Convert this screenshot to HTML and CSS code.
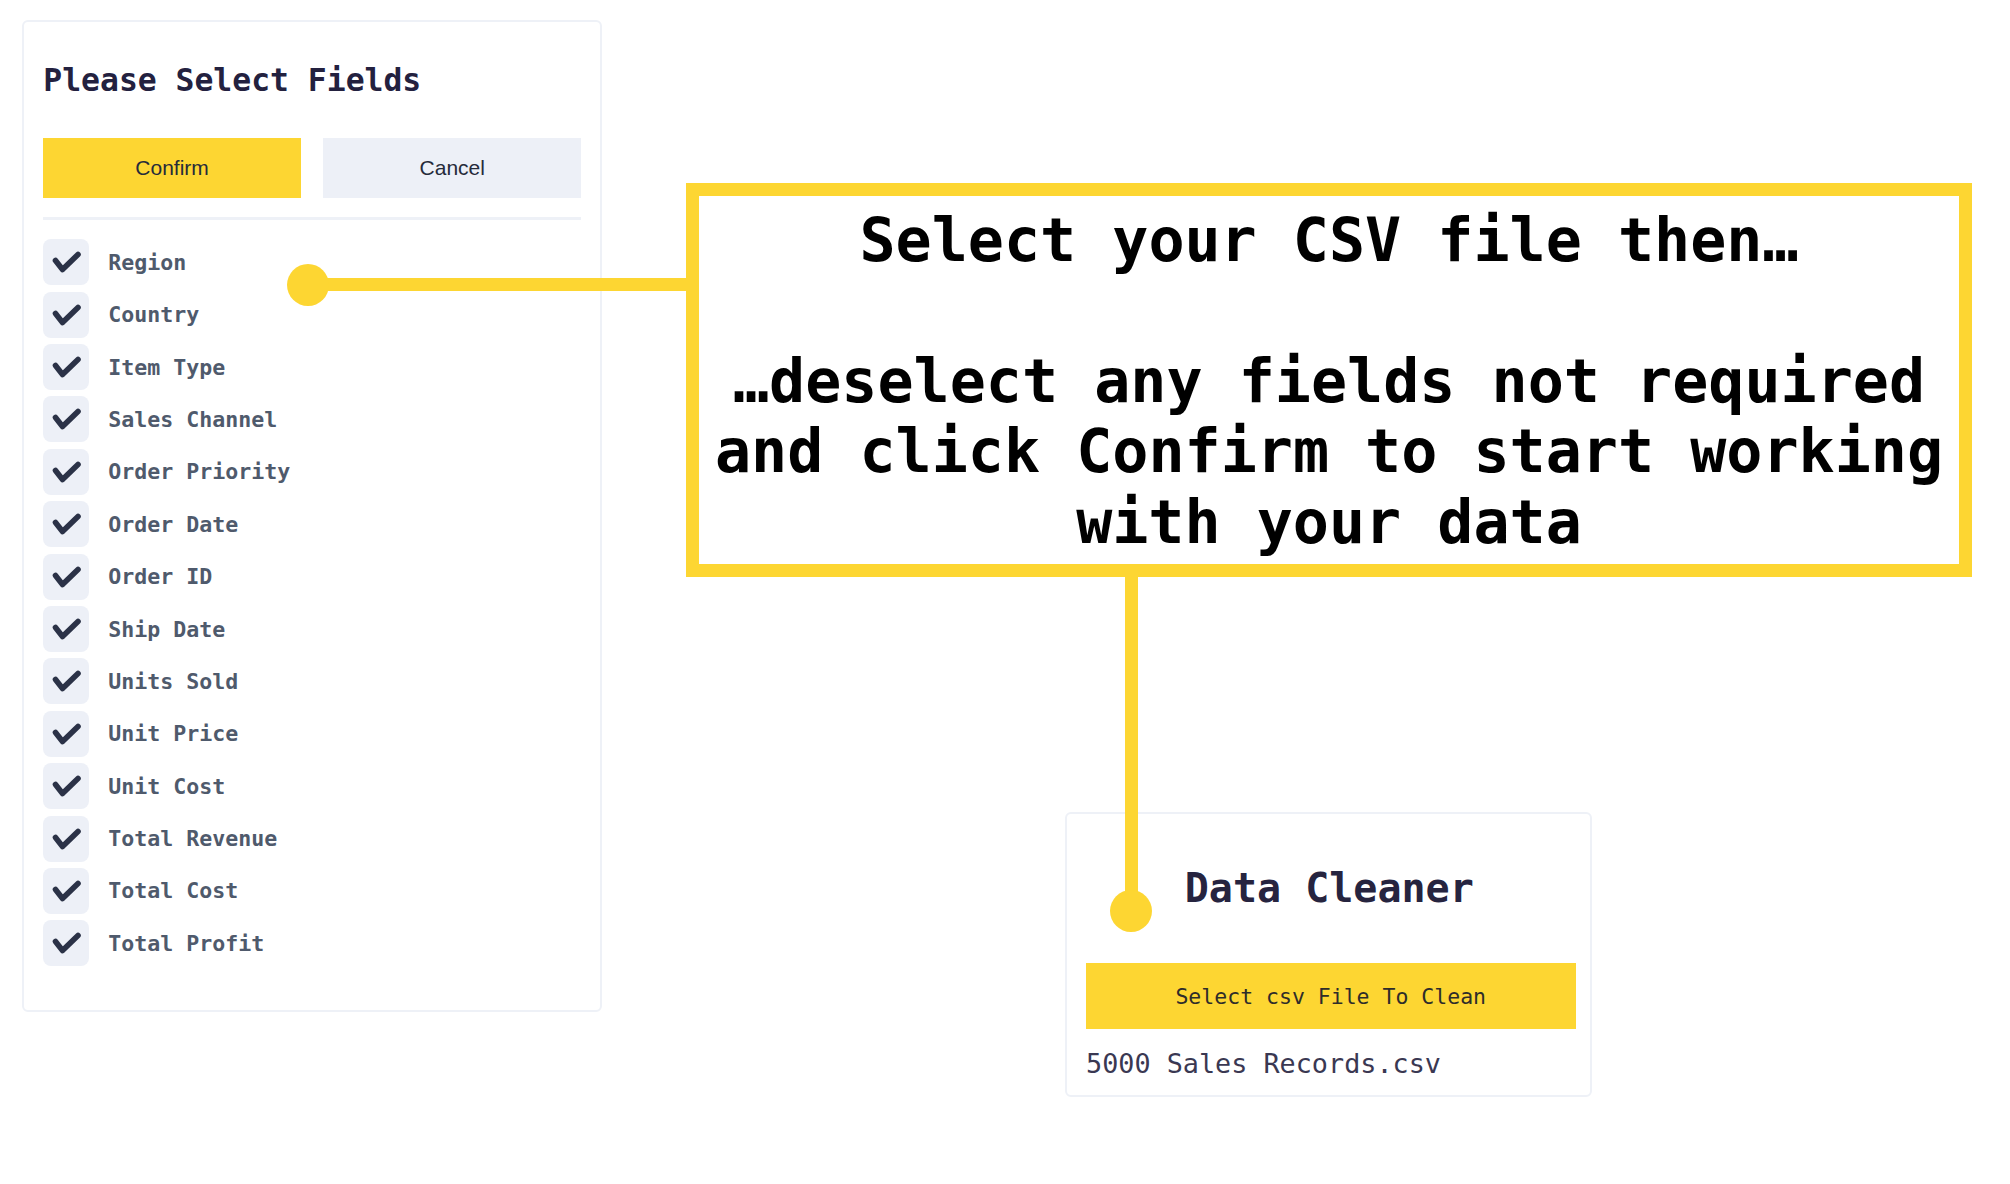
FILE: index.html
```html
<!DOCTYPE html>
<html lang="en">
<head>
<meta charset="utf-8">
<title>Data Cleaner – Select Fields</title>
<link rel="stylesheet" href="styles.css">
</head>
<body>
<div class="canvas">
  <section class="panel">
    <h2 class="panel-title">Please Select Fields</h2>
    <div class="actions">
      <button class="btn btn-confirm">Confirm</button>
      <button class="btn btn-cancel">Cancel</button>
    </div>
    <hr class="divider">
    <ul class="fields">
      <li class="field"><span class="box"><svg viewBox="0 0 46 46"><polyline points="12.5,21.5 19.5,30.5 35,15.5"/></svg></span><span class="label">Region</span></li>
      <li class="field"><span class="box"><svg viewBox="0 0 46 46"><polyline points="12.5,21.5 19.5,30.5 35,15.5"/></svg></span><span class="label">Country</span></li>
      <li class="field"><span class="box"><svg viewBox="0 0 46 46"><polyline points="12.5,21.5 19.5,30.5 35,15.5"/></svg></span><span class="label">Item Type</span></li>
      <li class="field"><span class="box"><svg viewBox="0 0 46 46"><polyline points="12.5,21.5 19.5,30.5 35,15.5"/></svg></span><span class="label">Sales Channel</span></li>
      <li class="field"><span class="box"><svg viewBox="0 0 46 46"><polyline points="12.5,21.5 19.5,30.5 35,15.5"/></svg></span><span class="label">Order Priority</span></li>
      <li class="field"><span class="box"><svg viewBox="0 0 46 46"><polyline points="12.5,21.5 19.5,30.5 35,15.5"/></svg></span><span class="label">Order Date</span></li>
      <li class="field"><span class="box"><svg viewBox="0 0 46 46"><polyline points="12.5,21.5 19.5,30.5 35,15.5"/></svg></span><span class="label">Order ID</span></li>
      <li class="field"><span class="box"><svg viewBox="0 0 46 46"><polyline points="12.5,21.5 19.5,30.5 35,15.5"/></svg></span><span class="label">Ship Date</span></li>
      <li class="field"><span class="box"><svg viewBox="0 0 46 46"><polyline points="12.5,21.5 19.5,30.5 35,15.5"/></svg></span><span class="label">Units Sold</span></li>
      <li class="field"><span class="box"><svg viewBox="0 0 46 46"><polyline points="12.5,21.5 19.5,30.5 35,15.5"/></svg></span><span class="label">Unit Price</span></li>
      <li class="field"><span class="box"><svg viewBox="0 0 46 46"><polyline points="12.5,21.5 19.5,30.5 35,15.5"/></svg></span><span class="label">Unit Cost</span></li>
      <li class="field"><span class="box"><svg viewBox="0 0 46 46"><polyline points="12.5,21.5 19.5,30.5 35,15.5"/></svg></span><span class="label">Total Revenue</span></li>
      <li class="field"><span class="box"><svg viewBox="0 0 46 46"><polyline points="12.5,21.5 19.5,30.5 35,15.5"/></svg></span><span class="label">Total Cost</span></li>
      <li class="field"><span class="box"><svg viewBox="0 0 46 46"><polyline points="12.5,21.5 19.5,30.5 35,15.5"/></svg></span><span class="label">Total Profit</span></li>
    </ul>
  </section>

  <div class="connector connector-h"></div>
  <div class="dot dot-fields"></div>

  <div class="callout">
    <p class="callout-text">Select your CSV file then…<br><br>…deselect any fields not required and click Confirm to start working with your data</p>
  </div>

  <section class="card">
    <h2 class="card-title">Data Cleaner</h2>
    <button class="btn-select">Select csv File To Clean</button>
    <p class="filename">5000 Sales Records.csv</p>
  </section>

  <div class="connector connector-v"></div>
  <div class="dot dot-card"></div>
</div>
</body>
</html>
```

FILE: styles.css
```css
html, body {
  margin: 0;
  padding: 0;
  background: #ffffff;
}

.canvas {
  position: relative;
  width: 2010px;
  height: 1184px;
  overflow: hidden;
  box-sizing: border-box;
  padding: 20px 0 0 21.7px;
  font-family: "DejaVu Sans Mono", "Liberation Mono", monospace;
}

/* ---------- Field selection panel ---------- */
.panel {
  box-sizing: border-box;
  width: 580px;
  height: 991.5px;
  border: 2px solid #eef1f7;
  border-radius: 6px;
  padding: 40px 18.7px 0 19.6px;
}

.panel-title {
  margin: 0;
  font-size: 31.4px;
  line-height: 37.6px;
  font-weight: bold;
  color: #23213f;
}

.actions {
  display: flex;
  gap: 22.6px;
  margin-top: 38.1px;
}

.btn {
  flex: 1;
  height: 60px;
  border: 0;
  border-radius: 0;
  font-family: "Liberation Sans", Arial, sans-serif;
  font-size: 21px;
  color: #262b3a;
  padding: 0;
}

.btn-confirm {
  background: #fdd632;
}

.btn-cancel {
  background: #edf0f7;
}

.divider {
  margin: 19.3px 0 0;
  height: 3px;
  border: 0;
  background: #eef1f7;
}

.fields {
  list-style: none;
  margin: 19.3px 0 0;
  padding: 0;
  display: flex;
  flex-direction: column;
  gap: 6.4px;
}

.field {
  display: flex;
  align-items: center;
  gap: 19px;
  height: 46px;
}

.box {
  width: 46px;
  height: 46px;
  flex: none;
  border-radius: 8px;
  background: #edf0f7;
  display: block;
}

.box svg {
  display: block;
  width: 46px;
  height: 46px;
}

.box polyline {
  fill: none;
  stroke: #2b3247;
  stroke-width: 5.6;
  stroke-linecap: round;
  stroke-linejoin: round;
}

.label {
  font-size: 21.6px;
  font-weight: bold;
  color: #4f5a6c;
  white-space: nowrap;
}

/* ---------- Annotation connectors ---------- */
.connector {
  position: absolute;
  background: #fdd632;
}

.connector-h {
  left: 307px;
  top: 278.3px;
  width: 380px;
  height: 12.5px;
}

.connector-v {
  left: 1125px;
  top: 570px;
  width: 12.7px;
  height: 341px;
}

.dot {
  position: absolute;
  width: 42px;
  height: 42px;
  border-radius: 50%;
  background: #fdd632;
}

.dot-fields {
  left: 286.8px;
  top: 263.5px;
}

.dot-card {
  left: 1110.3px;
  top: 890px;
}

/* ---------- Callout ---------- */
.callout {
  position: absolute;
  left: 686px;
  top: 183px;
  width: 1286px;
  height: 394px;
  box-sizing: border-box;
  border: 13px solid #fdd632;
  background: #ffffff;
  padding: 9px 0 0;
}

.callout-text {
  margin: 0;
  text-align: center;
  font-size: 60px;
  line-height: 70.4px;
  font-weight: bold;
  color: #000000;
}

/* ---------- Data Cleaner card ---------- */
.card {
  position: absolute;
  left: 1065px;
  top: 811.5px;
  width: 527px;
  height: 285.5px;
  box-sizing: border-box;
  border: 2px solid #eef1f7;
  border-radius: 6px;
  background: #ffffff;
  padding: 51px 14.5px 0 19px;
}

.card-title {
  margin: 0 0 0 -3px;
  text-align: center;
  font-size: 40px;
  line-height: 46.6px;
  font-weight: bold;
  color: #26243f;
}

.btn-select {
  display: block;
  width: 100%;
  height: 66px;
  margin-top: 52px;
  border: 0;
  background: #fdd632;
  font-family: "DejaVu Sans Mono", "Liberation Mono", monospace;
  font-size: 21.5px;
  color: #2e2c2a;
  padding: 0;
}

.filename {
  margin: 18.5px 0 0;
  font-size: 26.8px;
  line-height: 31.2px;
  color: #3a3852;
}
```
